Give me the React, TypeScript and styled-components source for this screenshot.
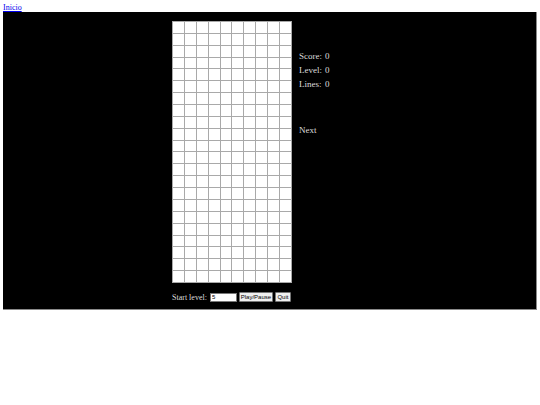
import styled, {createGlobalStyle} from 'styled-components';

const GlobalStyle = createGlobalStyle`
    body {
        margin: 4px 3px;
        font-family: "Liberation Serif", "DejaVu Serif", serif;
        background: #fff;
    }
`;

const TopLink = styled.a`
    display: block;
    font-size: 8px;
    line-height: 8px;
    color: #00e;
    text-decoration: underline;
`;

const Stage = styled.div`
    background-color: #000;
    border-right: 1px solid #8a8a8a;
    border-bottom: 1px solid #8a8a8a;
    padding: 9px 0 7px;
    color: #ddd;
`;

const Inner = styled.div`
    width: 195px;
    margin: 0 auto;
    display: flex;
    gap: 7px;
`;

const Column = styled.div`
    display: flex;
    flex-direction: column;
    width: 120px;
`;

const Board = styled.div<{cols: number; rows: number}>`
    width: 120px;
    height: 262px;
    display: grid;
    grid-template-columns: repeat(${p => p.cols}, 1fr);
    grid-template-rows: repeat(${p => p.rows}, 1fr);
    gap: 1px;
    padding: 1px;
    box-sizing: border-box;
    background-color: #a9a9a9;
`;

const Cell = styled.div`
    background-color: #fff;
`;

const Controls = styled.div`
    display: flex;
    align-items: center;
    gap: 2px;
    margin-top: 9px;
    font-size: 8px;
    height: 10px;
    white-space: nowrap;
`;

const Label = styled.span`
    flex-shrink: 0;
    margin-right: 1px;
`;

const LevelInput = styled.input`
    width: 27px;
    height: 9px;
    flex-shrink: 0;
    box-sizing: border-box;
    border: 1px solid #777;
    padding: 0 1px;
    font-size: 6px;
    font-family: "Liberation Sans", Arial, sans-serif;
    background: #fff;
    color: #000;
`;

const Button = styled.button<{w: number}>`
    width: ${p => p.w}px;
    height: 10px;
    flex-shrink: 0;
    padding: 0;
    font-size: 6px;
    line-height: 8px;
    font-family: "Liberation Sans", Arial, sans-serif;
    background: #efefef;
    border: 1px solid #767676;
    border-radius: 1px;
    color: #000;
`;

const Panel = styled.div`
    width: 68px;
    padding-top: 28px;
    font-size: 9px;
`;

const StatRow = styled.div`
    display: flex;
    height: 14px;
    line-height: 14px;
`;

const StatName = styled.span`
    width: 26px;
`;

const NextLabel = styled.div`
    margin-top: 32px;
    line-height: 14px;
`;

const COLS = 10;
const ROWS = 22;

function App() {
    const cells = Array.from({length: COLS * ROWS}, (_, i) => i);
    return (
        <>
            <GlobalStyle />
            <TopLink href="#">Inicio</TopLink>
            <Stage>
                <Inner>
                    <Column>
                        <Board cols={COLS} rows={ROWS}>
                            {cells.map(i => <Cell key={i} />)}
                        </Board>
                        <Controls>
                            <Label>Start level:</Label>
                            <LevelInput defaultValue="5" />
                            <Button w={34}>Play/Pause</Button>
                            <Button w={16}>Quit</Button>
                        </Controls>
                    </Column>
                    <Panel>
                        <StatRow><StatName>Score:</StatName><span>0</span></StatRow>
                        <StatRow><StatName>Level:</StatName><span>0</span></StatRow>
                        <StatRow><StatName>Lines:</StatName><span>0</span></StatRow>
                        <NextLabel>Next</NextLabel>
                    </Panel>
                </Inner>
            </Stage>
        </>
    );
}

export default App;
